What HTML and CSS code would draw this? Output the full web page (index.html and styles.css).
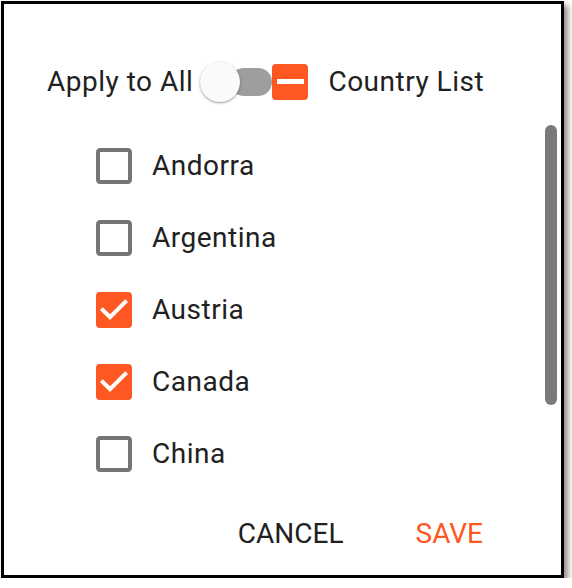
FILE: index.html
```html
<!DOCTYPE html>
<html>
<head>
<meta charset="utf-8">
<link rel="stylesheet" href="styles.css">
</head>
<body>
<div class="dialog">
  <div class="header">
    <span class="label">Apply to All</span>
    <span class="switch"><span class="track"></span><span class="thumb"></span></span>
    <svg class="box" viewBox="3 3 18 18" width="36" height="36"><rect x="3" y="3" width="18" height="18" rx="2" fill="#FF5722"/><rect x="5.5" y="10.5" width="13.5" height="2.5" fill="#fff"/></svg>
    <span class="label title">Country List</span>
  </div>
  <div class="body">
    <div class="list">
      <div class="row"><svg class="box" viewBox="3 3 18 18" width="36" height="36"><path fill="#757575" d="M19 5v14H5V5h14m0-2H5c-1.1 0-2 .9-2 2v14c0 1.1.9 2 2 2h14c1.1 0 2-.9 2-2V5c0-1.1-.9-2-2-2z"/></svg><span class="label">Andorra</span></div>
      <div class="row"><svg class="box" viewBox="3 3 18 18" width="36" height="36"><path fill="#757575" d="M19 5v14H5V5h14m0-2H5c-1.1 0-2 .9-2 2v14c0 1.1.9 2 2 2h14c1.1 0 2-.9 2-2V5c0-1.1-.9-2-2-2z"/></svg><span class="label">Argentina</span></div>
      <div class="row"><svg class="box" viewBox="3 3 18 18" width="36" height="36"><rect x="3" y="3" width="18" height="18" rx="2" fill="#FF5722"/><path fill="#fff" d="M10 17l-5-5 1.41-1.41L10 14.17l7.59-7.59L19 8l-9 9z"/></svg><span class="label">Austria</span></div>
      <div class="row"><svg class="box" viewBox="3 3 18 18" width="36" height="36"><rect x="3" y="3" width="18" height="18" rx="2" fill="#FF5722"/><path fill="#fff" d="M10 17l-5-5 1.41-1.41L10 14.17l7.59-7.59L19 8l-9 9z"/></svg><span class="label">Canada</span></div>
      <div class="row"><svg class="box" viewBox="3 3 18 18" width="36" height="36"><path fill="#757575" d="M19 5v14H5V5h14m0-2H5c-1.1 0-2 .9-2 2v14c0 1.1.9 2 2 2h14c1.1 0 2-.9 2-2V5c0-1.1-.9-2-2-2z"/></svg><span class="label">China</span></div>
    </div>
    <div class="scrollbar"><div class="scroll-thumb"></div></div>
  </div>
  <div class="actions">
    <span class="btn cancel">CANCEL</span>
    <span class="btn save">SAVE</span>
  </div>
</div>
</body>
</html>
```
FILE: styles.css
```css
html, body {
  margin: 0;
  padding: 0;
  background: #fff;
}
body {
  font-family: Roboto, "Liberation Sans", sans-serif;
  color: #212121;
}
.dialog {
  box-sizing: border-box;
  margin: 1px 0 0 1px;
  width: 563px;
  height: 577px;
  border: 3px solid #000;
  background: #fff;
  box-shadow: 4px 4px 6px rgba(0, 0, 0, 0.45);
  display: flex;
  flex-direction: column;
}
.label {
  font-size: 28px;
  line-height: 1;
  letter-spacing: 0.5px;
}
.header {
  display: flex;
  align-items: center;
  height: 48px;
  margin-top: 54px;
  padding-left: 43px;
}
.switch {
  position: relative;
  width: 72px;
  height: 40px;
  margin-left: 7px;
  flex: none;
}
.track {
  position: absolute;
  left: 30px;
  top: 6px;
  width: 42px;
  height: 28px;
  border-radius: 14px;
  background: #9e9e9e;
}
.thumb {
  position: absolute;
  left: 0;
  top: 0;
  width: 40px;
  height: 40px;
  border-radius: 50%;
  background: #fafafa;
  box-shadow: 0 1px 3px rgba(0, 0, 0, 0.3), 0 1px 1px rgba(0, 0, 0, 0.14);
}
.box {
  display: block;
  flex: none;
}
.title {
  margin-left: 20px;
}
.body {
  display: flex;
  margin-top: 19px;
  height: 384px;
}
.list {
  flex: 1;
  padding-top: 5px;
  padding-left: 92px;
}
.row {
  display: flex;
  align-items: center;
  gap: 20px;
  height: 72px;
}
.scrollbar {
  width: 12px;
  margin-right: 4px;
}
.scroll-thumb {
  height: 280px;
  border-radius: 6px;
  background: #7a7a7a;
}
.actions {
  display: flex;
  justify-content: flex-end;
  align-items: center;
  gap: 72px;
  height: 48px;
  margin-top: 1px;
  padding-right: 78px;
}
.btn {
  font-size: 28px;
  line-height: 1;
}
.cancel {
  color: #212121;
}
.save {
  color: #FF5722;
}
```
